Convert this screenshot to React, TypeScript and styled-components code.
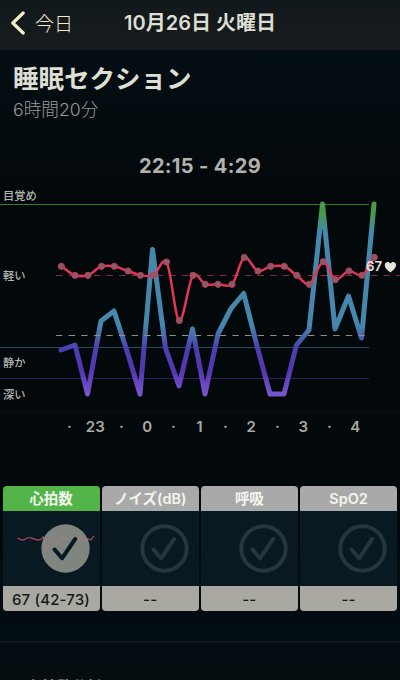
import React from "react";
import styled, { createGlobalStyle } from "styled-components";

const GlobalStyle = createGlobalStyle`
  * { box-sizing: border-box; }
  body { margin: 0; background: #020a0e; }
`;

const Screen = styled.main`
  display: flex;
  flex-direction: column;
  width: 400px;
  height: 680px;
  overflow: hidden;
  background: linear-gradient(#030e14 50px, #040b0e 140px, #03080b 190px, #03080b 480px, #030d11 620px, #030f13 640px);
  color: #deded2;
  font-family: Inter, "Noto Sans CJK JP", sans-serif;
  white-space: nowrap;
`;

const NavBar = styled.header`
  display: grid;
  grid-template-columns: 100px 200px 100px;
  align-items: center;
  height: 50px;
  flex: none;
  padding-bottom: 4px;
  background: linear-gradient(#11181b, #171c1e);
`;

const BackButton = styled.button`
  display: flex;
  align-items: center;
  gap: 9px;
  padding: 0 0 0 10px;
  border: 0;
  background: none;
  color: #f1edcc;
  font: 300 19px/28px "Noto Sans CJK JP", sans-serif;
`;

const NavTitle = styled.h1`
  margin: 0;
  text-align: center;
  font-size: 20px;
  font-weight: 600;
  line-height: 28px;
`;

const Heading = styled.section`
  height: 101px;
  flex: none;
  padding: 11px 13px 0;
`;

const SectionTitle = styled.h2`
  margin: 0;
  font-size: 25.5px;
  font-weight: 700;
  line-height: 36px;
`;

const Duration = styled.p`
  margin: 0;
  color: #969996;
  font-size: 17.7px;
  font-weight: 300;
  line-height: 26px;
`;

const TimeRange = styled.div`
  height: 30px;
  flex: none;
  text-align: center;
  color: #b2b1ab;
  font-size: 20px;
  font-weight: 700;
  line-height: 30px;
  letter-spacing: 0.35px;
`;

const Chart = styled.svg`
  display: block;
  width: 400px;
  height: 305px;
  flex: none;
  font-family: Inter, "Noto Sans CJK JP", sans-serif;
`;

const Metrics = styled.section`
  display: grid;
  grid-template-columns: repeat(4, 97px);
  column-gap: 2.2px;
  padding-left: 2.5px;
  height: 155px;
  flex: none;
`;

const Card = styled.article`
  display: grid;
  grid-template-rows: 25px 75px 25px;
  height: 125px;
  overflow: hidden;
  border-radius: 4px;
  background: #091921;
`;

const CardTitle = styled.div<{ $active: boolean }>`
  background: ${(p) => (p.$active ? "#53b44a" : "#a9a9a9")};
  color: #f3f5ef;
  text-align: center;
  font-size: 14.5px;
  font-weight: 600;
  line-height: 26px;
`;

const CardValue = styled.div`
  background: #aaa9a1;
  color: #101a1e;
  text-align: center;
  font-size: 15px;
  font-weight: 500;
  line-height: 27px;
  letter-spacing: 0.15px;
`;

const CardArt = styled.svg`
  display: block;
  width: 97px;
  height: 75px;
`;

const NextSection = styled.section`
  height: 39px;
  flex: none;
  overflow: hidden;
  border-top: 2px solid #13191b;
  padding: 32px 0 0 27px;
  background: linear-gradient(#040c13, #070e11);
  color: #8d918e;
  font-size: 15px;
  font-weight: 600;
  line-height: 24px;
`;

type Point = [number, number];

const sleep: Point[] = [
  [61, 350], [75, 345], [87.5, 394], [101, 321], [114, 311], [127, 351], [140, 394],
  [152.5, 249.5], [165.5, 348], [179, 386], [192.5, 329], [205, 394], [218, 334],
  [231, 308.5], [243.7, 293.5], [257, 346], [270, 394], [284, 394], [296.5, 345],
  [309, 330], [322.5, 204], [335, 329], [348.5, 296], [361.5, 338], [374, 204],
];

const heart: Point[] = [
  [61.3, 266.3], [75, 275.3], [88, 275.3], [101.5, 266.3], [114.3, 266.3], [128, 271],
  [140.5, 275.3], [153.3, 275.3], [166.5, 262], [179.3, 320.5], [193, 275.3],
  [205.3, 284.3], [218, 284.3], [232, 284.3], [244.3, 257.5], [258, 271],
  [270.7, 266.3], [284.3, 266.3], [296.7, 275.3], [309.3, 284.3], [323.2, 261.7],
  [335.3, 279.7], [349, 271], [362, 275.3], [374.3, 257.3],
];

const curve = (pts: Point[]) => {
  let d = `M${pts[0]}`;
  for (let i = 0; i < pts.length - 1; i++) {
    const a = pts[Math.max(0, i - 1)];
    const b = pts[i];
    const c = pts[i + 1];
    const e = pts[Math.min(pts.length - 1, i + 2)];
    d += `C${b[0] + (c[0] - a[0]) / 6},${b[1] + (c[1] - a[1]) / 8} ${c[0] - (e[0] - b[0]) / 6},${c[1] - (e[1] - b[1]) / 8} ${c}`;
  }
  return d;
};

const stages = [
  { label: "目覚め", y: 200 },
  { label: "軽い", y: 280 },
  { label: "静か", y: 367 },
  { label: "深い", y: 399 },
];

const hours = ["·", "23", "·", "0", "·", "1", "·", "2", "·", "3", "·", "4"];

const SleepChart = () => (
  <Chart viewBox="0 181 400 305">
    <defs>
      <linearGradient id="depth" gradientUnits="userSpaceOnUse" x1="0" y1="204" x2="0" y2="394">
        <stop offset="0" stopColor="#489b48" />
        <stop offset=".05" stopColor="#489949" />
        <stop offset=".14" stopColor="#4488aa" />
        <stop offset=".64" stopColor="#4687ac" />
        <stop offset=".76" stopColor="#4c3eae" />
        <stop offset=".88" stopColor="#5437af" />
        <stop offset="1" stopColor="#7756cc" />
      </linearGradient>
    </defs>
    {stages.map((s) => (
      <text key={s.label} x="3" y={s.y} fontSize="11.3" fontWeight="500" fill="#b3b5b0">{s.label}</text>
    ))}
    <path d="M0 204.5H369" stroke="#347a31" strokeWidth="1.2" />
    <path d="M0 347.5H369" stroke="#284c5a" strokeWidth="1.1" />
    <path d="M0 378.5H369" stroke="#28205a" strokeWidth="1.1" />
    <path d="M0 411.5H400" stroke="#061014" />
    <path d={`M${sleep.join("L")}`} fill="none" stroke="url(#depth)" strokeWidth="5" strokeLinecap="round" strokeLinejoin="round" />
    <path d="M56 275.5H400" stroke="#8a2947" strokeDasharray="6.4 6.2" />
    <path d="M56 335.5H369" stroke="#8b9282" strokeDasharray="6.4 6.2" />
    <path d={curve(heart)} fill="none" stroke="#e33558" strokeWidth="2.5" strokeLinejoin="round" />
    {heart.map(([x, y]) => (
      <circle key={x} cx={x} cy={y} r="3.1" fill="#8b5967" stroke="#bd3c59" />
    ))}
    <text x="366" y="271.2" fontSize="13.2" fontWeight="600" fill="#e5e3dc">67</text>
    <path d="M390.4 272.4C386 269 384.8 267.4 384.8 265c0-3.4 4.1-4.2 5.6-1.5 1.5-2.7 5.6-1.9 5.6 1.5 0 2.4-1.2 4-5.6 7.4Z" fill="#e5e3dc" />
    {hours.map((h, i) => (
      <text key={i} x={69.3 + i * 26} y="432" textAnchor="middle" fontSize="15" fontWeight="600" fill="#aaa9a3">{h}</text>
    ))}
  </Chart>
);

const trend = heart.map(([x, y]) => [17 + (x - 61) * 0.244 - 2.5, 28.8 + (y - 275) * 0.23]);

const MetricCard = ({ title, value, active = false }: { title: string; value: string; active?: boolean }) => (
  <Card>
    <CardTitle $active={active}>{title}</CardTitle>
    <CardArt viewBox="0 0 97 75">
      {active && <path d={`M${trend.join("L")}`} fill="none" stroke="#b04864" strokeWidth="1.1" />}
      {active ? (
        <circle cx="62.5" cy="37.5" r="24.2" fill="#9da097" fillOpacity=".8" />
      ) : (
        <circle cx="62.5" cy="37.5" r="22.2" fill="none" stroke="#28363b" strokeWidth="4" />
      )}
      {active && <path d={`M${trend.join("L")}`} fill="none" stroke="#b04864" strokeOpacity=".3" />}
      <path d="M51.5 38.5L59 47.3L72.2 28" fill="none" stroke={active ? "#071821" : "#28363b"} strokeWidth="4" strokeLinecap="round" strokeLinejoin="round" />
    </CardArt>
    <CardValue>{value}</CardValue>
  </Card>
);

export default function App() {
  return (
    <>
      <GlobalStyle />
      <Screen>
        <NavBar>
          <BackButton>
            <svg width="16" height="24" viewBox="0 0 16 24" fill="none" stroke="currentColor" strokeWidth="3.2" strokeLinecap="round" strokeLinejoin="round">
              <path d="M13.2 2L2.8 12L13.2 22" />
            </svg>
            今日
          </BackButton>
          <NavTitle>10月26日 火曜日</NavTitle>
        </NavBar>
        <Heading>
          <SectionTitle>睡眠セクション</SectionTitle>
          <Duration>6時間20分</Duration>
        </Heading>
        <TimeRange>22:15 - 4:29</TimeRange>
        <SleepChart />
        <Metrics>
          <MetricCard title="心拍数" value="67 (42-73)" active />
          <MetricCard title="ノイズ(dB)" value="--" />
          <MetricCard title="呼吸" value="--" />
          <MetricCard title="SpO2" value="--" />
        </Metrics>
        <NextSection>心拍数分析</NextSection>
      </Screen>
    </>
  );
}
